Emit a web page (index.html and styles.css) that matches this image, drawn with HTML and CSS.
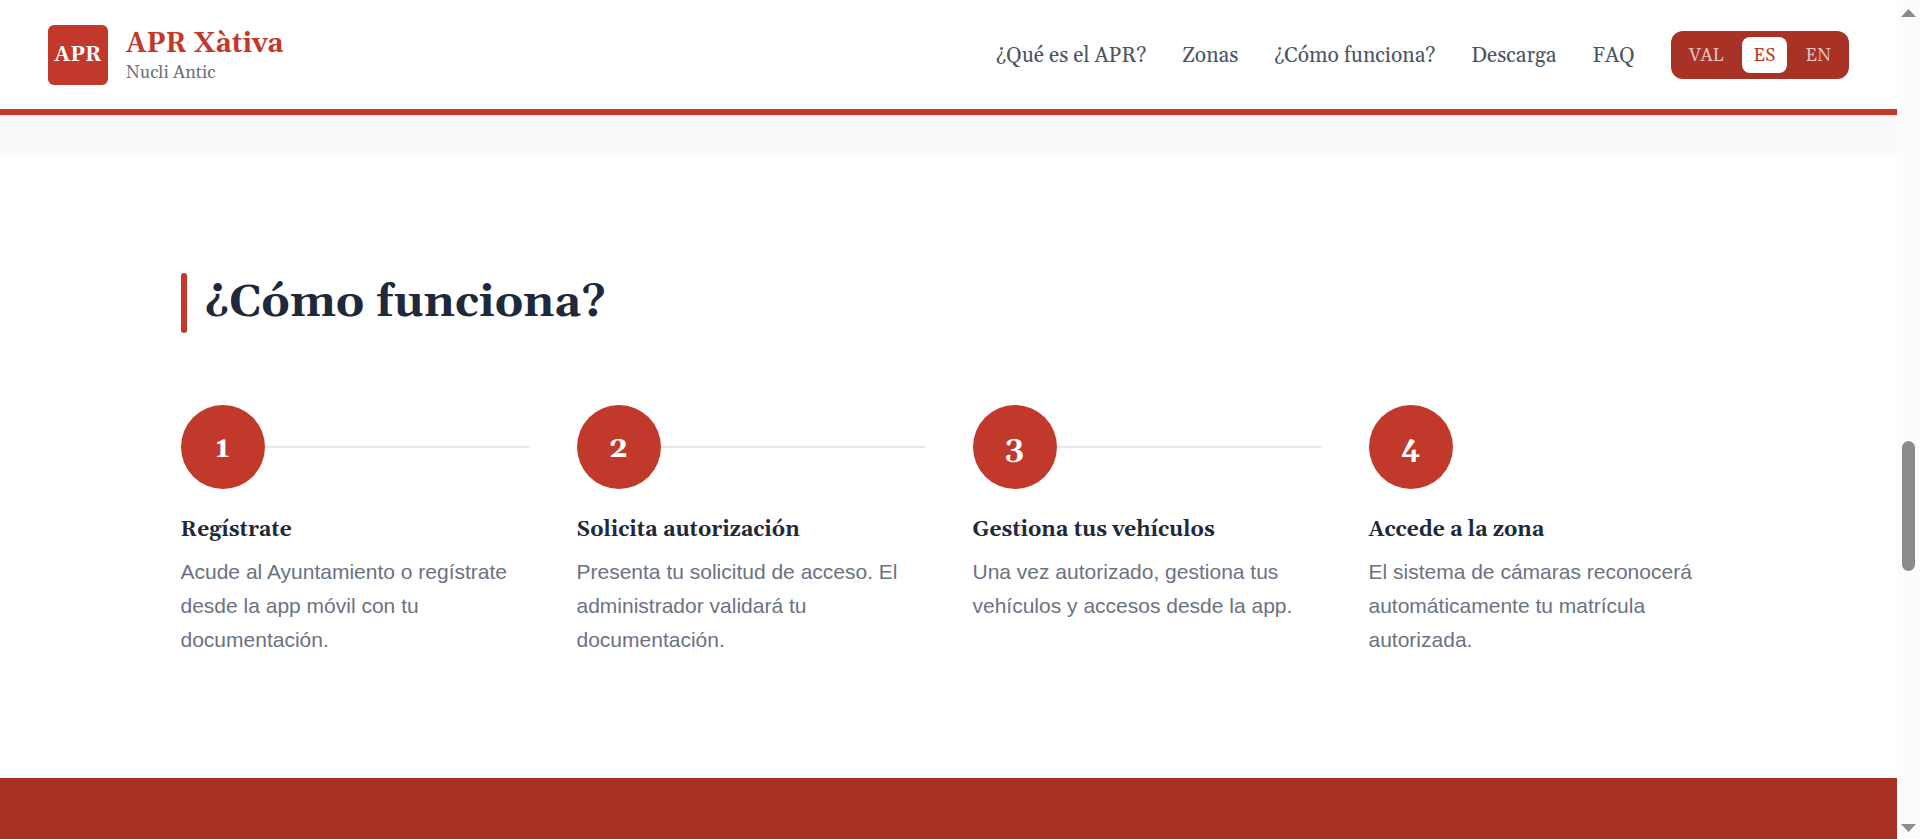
FILE: index.html
```html
<!DOCTYPE html>
<html lang="es">
<head>
<meta charset="utf-8">
<meta name="viewport" content="width=device-width, initial-scale=1">
<title>APR Xàtiva</title>
<link rel="stylesheet" href="styles.css">
</head>
<body class="window">
<div class="page">
  <header class="header">
    <a class="brand" href="#inicio">
      <span class="brand-logo">APR</span>
      <span class="brand-text">
        <span class="brand-name">APR Xàtiva</span>
        <span class="brand-sub">Nucli Antic</span>
      </span>
    </a>
    <div class="header-right">
      <nav class="nav">
        <a class="nav-link" href="#que-es">¿Qué es el APR?</a>
        <a class="nav-link" href="#zonas">Zonas</a>
        <a class="nav-link" href="#como-funciona">¿Cómo funciona?</a>
        <a class="nav-link" href="#descarga">Descarga</a>
        <a class="nav-link" href="#faq">FAQ</a>
      </nav>
      <div class="lang">
        <button class="lang-button" type="button">VAL</button>
        <button class="lang-button lang-active" type="button">ES</button>
        <button class="lang-button" type="button">EN</button>
      </div>
    </div>
  </header>
  <main class="main">
    <div class="previous"></div>
    <section class="how" id="como-funciona">
      <div class="container">
        <h2 class="section-title">¿Cómo funciona?</h2>
        <ol class="steps">
          <li class="step">
            <div class="step-head"><span class="step-number">1</span><span class="step-line"></span></div>
            <h3 class="step-title">Regístrate</h3>
            <p class="step-text">Acude al Ayuntamiento o regístrate desde la app móvil con tu documentación.</p>
          </li>
          <li class="step">
            <div class="step-head"><span class="step-number">2</span><span class="step-line"></span></div>
            <h3 class="step-title">Solicita autorización</h3>
            <p class="step-text">Presenta tu solicitud de acceso. El administrador validará tu documentación.</p>
          </li>
          <li class="step">
            <div class="step-head"><span class="step-number">3</span><span class="step-line"></span></div>
            <h3 class="step-title">Gestiona tus vehículos</h3>
            <p class="step-text">Una vez autorizado, gestiona tus vehículos y accesos desde la app.</p>
          </li>
          <li class="step">
            <div class="step-head"><span class="step-number">4</span></div>
            <h3 class="step-title">Accede a la zona</h3>
            <p class="step-text">El sistema de cámaras reconocerá automáticamente tu matrícula autorizada.</p>
          </li>
        </ol>
      </div>
    </section>
    <div class="download"></div>
  </main>
</div>
<div class="scrollbar" aria-hidden="true">
  <svg class="arrow" viewBox="0 0 15 8"><path d="M7.5 0 15 8H0z"/></svg>
  <div class="track"><div class="thumb"></div></div>
  <svg class="arrow" viewBox="0 0 15 8"><path d="M0 0H15L7.5 8z"/></svg>
</div>
</body>
</html>
```

FILE: styles.css
```css
:root {
  --red: #c0392b;
  --red-dark: #a83226;
  --ink: #1e293b;
  --serif: Georgia, Gelasio, "Liberation Serif", serif;
  --sans: Arial, "Liberation Sans", sans-serif;
}

* {
  box-sizing: border-box;
}

.window {
  display: grid;
  grid-template-columns: minmax(0, 1fr) 23px;
  height: 100vh;
  margin: 0;
  overflow: hidden;
  background: #fff;
  font-family: var(--sans);
}

.page {
  display: flex;
  flex-direction: column;
  min-width: 0;
  min-height: 0;
  overflow: hidden;
}

.header {
  position: relative;
  display: flex;
  align-items: center;
  justify-content: space-between;
  padding: 25px 48px 24px;
  border-bottom: 6px solid var(--red);
  background: #fff;
  box-shadow: 0 1px 4px rgba(0, 0, 0, 0.12);
  font-family: var(--serif);
}

.brand {
  display: flex;
  align-items: center;
  gap: 18px;
  text-decoration: none;
}

.brand-logo {
  display: grid;
  place-items: center;
  width: 60px;
  height: 60px;
  border-radius: 6px;
  background: var(--red);
  color: #fff;
  font-size: 21px;
  font-weight: 700;
}

.brand-text {
  display: flex;
  flex-direction: column;
  padding-top: 2px;
}

.brand-name {
  color: var(--red);
  font-size: 27px;
  font-weight: 700;
  line-height: 34px;
}

.brand-sub {
  color: #6b7280;
  font-size: 18px;
  line-height: 24px;
}

.header-right {
  display: flex;
  align-items: center;
  gap: 36px;
}

.nav {
  display: flex;
  gap: 36px;
  padding-top: 2px;
}

.nav-link {
  color: #4b5563;
  font-size: 21px;
  text-decoration: none;
}

.lang {
  display: flex;
  gap: 6px;
  padding: 6px;
  border-radius: 12px;
  background: var(--red-dark);
}

.lang-button {
  height: 36px;
  padding: 0 12px;
  border: 0;
  border-radius: 8px;
  background: transparent;
  color: rgba(255, 255, 255, 0.7);
  font-family: var(--serif);
  font-size: 18px;
  cursor: pointer;
}

.lang-active {
  background: #fff;
  color: var(--red);
}

.main {
  display: flex;
  flex: 1;
  flex-direction: column;
}

.previous {
  height: 38px;
  background: #f8fafc;
}

.how {
  padding: 120px 48px 121px;
}

.container {
  max-width: 1536px;
  margin: 0 auto;
}

.section-title {
  display: flex;
  align-items: center;
  gap: 18px;
  height: 60px;
  margin: 0 0 72px;
  color: var(--ink);
  font-family: var(--serif);
  font-size: 45px;
  line-height: 60px;
}

.section-title::before {
  width: 6px;
  height: 60px;
  border-radius: 3px;
  background: var(--red);
  content: "";
}

.steps {
  display: grid;
  grid-template-columns: repeat(4, minmax(0, 1fr));
  gap: 48px;
  margin: 0;
  padding: 0;
  list-style: none;
}

.step-head {
  display: flex;
  align-items: center;
  margin-bottom: 24px;
}

.step-number {
  display: grid;
  place-items: center;
  width: 84px;
  height: 84px;
  padding-top: 2px;
  border-radius: 50%;
  background: var(--red);
  color: #fff;
  font-family: var(--serif);
  font-size: 30px;
  font-weight: 700;
}

.step-line {
  flex: 1;
  height: 2px;
  background: #e5e7eb;
}

.step-title {
  margin: 0 0 8px;
  color: var(--ink);
  font-family: var(--serif);
  font-size: 21px;
  line-height: 34px;
}

.step-text {
  margin: 0;
  color: #6b7280;
  font-size: 21px;
  line-height: 34px;
}

.download {
  flex: 1;
  background: var(--red-dark);
}

.scrollbar {
  display: flex;
  flex-direction: column;
  align-items: center;
  justify-content: space-between;
  padding: 9px 0 7px;
  background: #fcfcfc;
}

.arrow {
  width: 15px;
  height: 8px;
  fill: #8b8b8b;
}

.track {
  display: grid;
  flex: 1;
  grid-template-rows: 424fr 130fr 253fr;
}

.thumb {
  grid-row: 2;
  width: 13px;
  border-radius: 7px;
  background: #8b8b8b;
}
```
